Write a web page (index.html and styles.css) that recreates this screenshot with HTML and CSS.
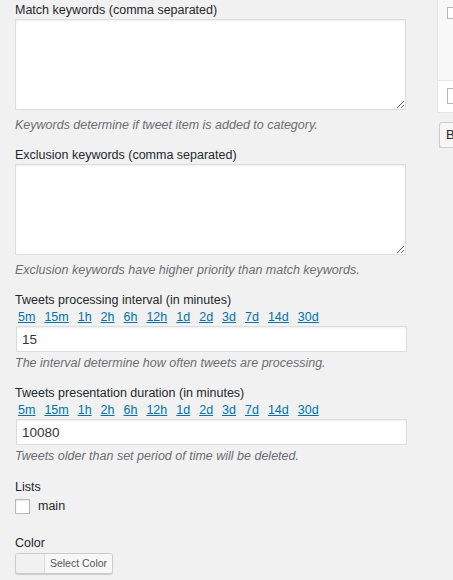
FILE: index.html
```html
<!DOCTYPE html>
<html>
<head>
<meta charset="utf-8">
<link rel="stylesheet" href="styles.css">
</head>
<body>
<div class="page">
  <main class="main">
    <div class="field">
      <label class="label">Match keywords (comma separated)</label>
      <textarea class="area"></textarea>
      <p class="desc desc-area">Keywords determine if tweet item is added to category.</p>
    </div>
    <div class="field">
      <label class="label">Exclusion keywords (comma separated)</label>
      <textarea class="area"></textarea>
      <p class="desc desc-area">Exclusion keywords have higher priority than match keywords.</p>
    </div>
    <div class="field">
      <label class="label">Tweets processing interval (in minutes)</label>
      <div class="links">
        <a href="#">5m</a><a href="#">15m</a><a href="#">1h</a><a href="#">2h</a><a href="#">6h</a><a href="#">12h</a><a href="#">1d</a><a href="#">2d</a><a href="#">3d</a><a href="#">7d</a><a href="#">14d</a><a href="#">30d</a>
      </div>
      <input class="text" type="text" value="15">
      <p class="desc desc-input">The interval determine how often tweets are processing.</p>
    </div>
    <div class="field">
      <label class="label">Tweets presentation duration (in minutes)</label>
      <div class="links">
        <a href="#">5m</a><a href="#">15m</a><a href="#">1h</a><a href="#">2h</a><a href="#">6h</a><a href="#">12h</a><a href="#">1d</a><a href="#">2d</a><a href="#">3d</a><a href="#">7d</a><a href="#">14d</a><a href="#">30d</a>
      </div>
      <input class="text" type="text" value="10080">
      <p class="desc desc-input">Tweets older than set period of time will be deleted.</p>
    </div>
    <div class="field field-lists">
      <div class="label">Lists</div>
      <div class="check-row"><span class="check"></span><span>main</span></div>
    </div>
    <div class="field field-color">
      <div class="label">Color</div>
      <button class="color-btn" type="button"><span class="swatch"></span><span class="color-text">Select Color</span></button>
    </div>
  </main>
  <aside class="side">
    <div class="side-box">
      <div class="side-body"><span class="side-check side-check-top"></span></div>
      <div class="side-foot"><span class="side-check"></span></div>
    </div>
    <div class="side-btn">B</div>
  </aside>
</div>
</body>
</html>
```
FILE: styles.css
```css
* { box-sizing: border-box; }
html, body { margin: 0; padding: 0; }
body {
  background: #f1f1f1;
  color: #23282d;
  font-family: "Liberation Sans", Arial, sans-serif;
  font-size: 12.5px;
  width: 453px;
  height: 580px;
  overflow: hidden;
}
.page {
  display: flex;
  align-items: flex-start;
}
.main {
  width: 437px;
  flex: none;
  padding: 1px 0 0 15px;
}
.field { display: flex; flex-direction: column; align-items: flex-start; }
.label {
  display: block;
  line-height: 18px;
  height: 18px;
}
.field + .field .label { margin-top: 12px; }
.area {
  display: block;
  width: 391px;
  height: 91px;
  margin: 0;
  border: 1px solid #ddd;
  box-shadow: inset 0 1px 2px rgba(0,0,0,0.07);
  background: #fff;
  font: inherit;
  resize: vertical;
  border-radius: 0;
}
.desc {
  margin: 0;
  font-style: italic;
  color: #6b6e72;
  line-height: 18px;
  height: 18px;
}
.desc-area { margin-top: 6px; }
.desc-input { margin-top: 2px; }
.links {
  display: flex;
  gap: 9px;
  line-height: 16px;
  height: 16px;
  margin: 0 0 1px 3px;
}
.links a { color: #0073aa; text-decoration: underline; }
.text {
  display: block;
  width: 391px;
  height: 26px;
  margin: 0 0 0 1px;
  padding: 0 5px;
  border: 1px solid #ddd;
  box-shadow: inset 0 1px 2px rgba(0,0,0,0.07);
  background: #fff;
  font-family: inherit;
  font-size: 13.5px;
  color: #32373c;
  border-radius: 0;
  outline: none;
}
.field.field-lists .label { margin-top: 13px; }
.check-row {
  display: flex;
  align-items: center;
  gap: 8px;
  margin-top: 2px;
  height: 16px;
  line-height: 16px;
}
.check {
  width: 15px;
  height: 15px;
  border: 1px solid #b4b9be;
  background: #fff;
  box-shadow: inset 0 1px 2px rgba(0,0,0,0.1);
}
.field.field-color .label { margin-top: 20px; }
.color-btn {
  display: flex;
  align-items: stretch;
  height: 21px;
  width: 98px;
  margin: 1px 0 0 0;
  padding: 0;
  border: 1px solid #ccc;
  border-radius: 3px;
  background: #f7f7f7;
  box-shadow: 0 1px 0 #ccc;
  font-family: inherit;
  cursor: pointer;
  overflow: hidden;
}
.swatch {
  width: 28px;
  flex: none;
  background: #f1f1f1;
}
.color-text {
  flex: 1;
  border-left: 1px solid #ddd;
  background: #f7f7f7;
  color: #555;
  font-size: 10.5px;
  line-height: 19px;
  text-align: center;
}
.side {
  flex: 1;
  min-width: 0;
  overflow: hidden;
}
.side-box {
  width: 200px;
  border: 1px solid #e5e5e5;
  border-top: none;
  background: #fff;
}
.side-body {
  height: 80px;
  background: #f8f8f8;
  padding: 7px 0 0 9px;
}
.side-foot {
  height: 32px;
  border-top: 1px solid #e5e5e5;
  background: #fff;
  padding: 7px 0 0 9px;
}
.side-check {
  display: block;
  width: 16px;
  height: 16px;
  border: 1px solid #b4b9be;
  background: #fff;
}
.side-check-top { height: 12px; }
.side-btn {
  margin: 9px 0 0 2px;
  width: 60px;
  height: 26px;
  border: 1px solid #ccc;
  border-radius: 3px;
  background: #f7f7f7;
  box-shadow: 0 1px 0 #ccc;
  padding-left: 6px;
  line-height: 24px;
  font-size: 13px;
  color: #23282d;
}
```
